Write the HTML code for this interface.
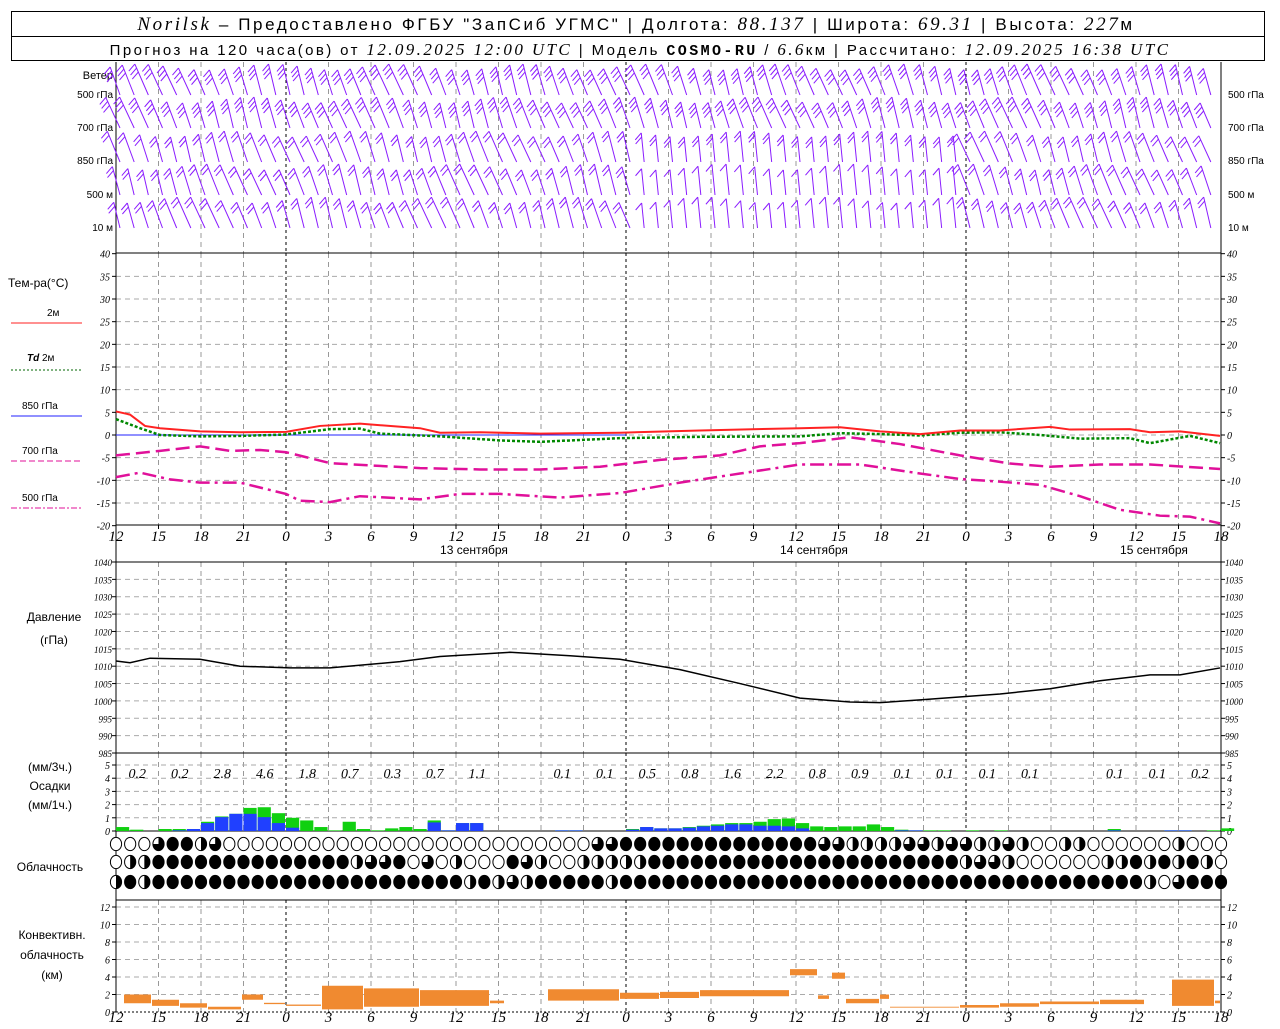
<!DOCTYPE html>
<html><head><meta charset="utf-8"><style>
body{margin:0;background:#fff;width:1280px;height:1024px;overflow:hidden;font-family:"Liberation Sans","DejaVu Sans",sans-serif}
svg text{font-family:"Liberation Sans","DejaVu Sans",sans-serif}
.it{font-family:"Liberation Serif",serif;font-style:italic}
</style></head><body>
<svg id="s" width="1280" height="1024" xmlns="http://www.w3.org/2000/svg">
<rect x="11.5" y="11.5" width="1253" height="49" fill="none" stroke="#000"/>
<line x1="11" y1="36.5" x2="1265" y2="36.5" stroke="#000"/>
<text x="636" y="30" font-size="17" text-anchor="middle" letter-spacing="2.6"><tspan class="it" font-size="19">Norilsk</tspan> – Предоставлено ФГБУ "ЗапСиб УГМС" | Долгота: <tspan class="it" font-size="19">88.137</tspan> | Широта: <tspan class="it" font-size="19">69.31</tspan> | Высота: <tspan class="it" font-size="19">227</tspan>м</text>
<text x="640" y="55" font-size="15" text-anchor="middle" letter-spacing="2.4">Прогноз на 120 часа(ов) от <tspan class="it" font-size="17">12.09.2025 12:00 UTC</tspan>  | Модель <tspan font-weight="bold" font-family="Liberation Mono">COSMO-RU</tspan> / <tspan class="it" font-size="17">6.6</tspan>км | Рассчитано: <tspan class="it" font-size="17">12.09.2025 16:38 UTC</tspan></text>
<g id="g"></g>
</svg>
<script>
const g=document.getElementById('g');let h='';
const X0=116,X1=1221,PH=(X1-X0)/78;
const hx=t=>X0+t*PH;
function L(x1,y1,x2,y2,c,w,d){h+=`<line x1="${x1}" y1="${y1}" x2="${x2}" y2="${y2}" stroke="${c}" stroke-width="${w||1}" ${d?`stroke-dasharray="${d}"`:''}/>`}
function T(x,y,s,fs,a,cls,col){h+=`<text x="${x}" y="${y}" font-size="${fs}" text-anchor="${a||'start'}" ${cls?`class="${cls}"`:''} fill="${col||'#000'}">${s}</text>`}
function R(x,y,w,hh,c){h+=`<rect x="${x}" y="${y}" width="${w}" height="${hh}" fill="${c}"/>`}
function vgrid(y1,y2){for(let t=3;t<78;t+=3){const day=(t-12)%24==0;L(hx(t),y1,hx(t),y2,day?'#000':'#999',1,day?'3,3':'5,4')}}
vgrid(62,253);vgrid(253,525);vgrid(562,753);vgrid(753,831);vgrid(900,1012);
const ty=v=>435-v*4.533;
for(let v=-20;v<=40;v+=5){const y=ty(v);if(v>-20&&v<40)L(X0,y,X1,y,'#aaa',1,'5,4');L(X0-4,y,X0,y,'#000');L(X1,y,X1+4,y,'#000');T(X0-6,y+4,v,10,'end','it');T(X1+6,y+4,v,10,'start','it')}
const py=p=>562+(1040-p)*3.473;
for(let p=985;p<=1040;p+=5){const y=py(p);if(p>985&&p<1040)L(X0,y,X1,y,'#aaa',1,'5,4');L(X0-4,y,X0,y,'#000');L(X1,y,X1+4,y,'#000');T(X0-4,y+4,p,9,'end','it');T(X1+4,y+4,p,9,'start','it')}
const ry=v=>831-v*13.2;
for(let v=0;v<=5;v++){const y=ry(v);if(v>0)L(X0,y,X1,y,'#aaa',1,'5,4');L(X0-4,y,X0,y,'#000');L(X1,y,X1+4,y,'#000');T(X0-6,y+4,v,10,'end','it');T(X1+6,y+4,v,10,'start','it')}
const cy=v=>1012-v*8.75;
for(let v=0;v<=12;v+=2){const y=cy(v);if(v>0)L(X0,y,X1,y,'#aaa',1,'5,4');L(X0-4,y,X0,y,'#000');L(X1,y,X1+4,y,'#000');T(X0-6,y+4,v,10,'end','it');T(X1+6,y+4,v,10,'start','it')}
L(X0,62,X0,1012,'#000');L(X1,62,X1,1012,'#000');
L(X0,253,X1,253,'#000');L(X0,525,X1,525,'#000');L(X0,753,X1,753,'#000');L(X0,562,X1,562,'#000');L(X0,831,X1,831,'#000');L(X0,900,X1,900,'#000');L(X0,1012,X1,1012,'#000',1,'2,2');
const lab=[12,15,18,21,0,3,6,9,12,15,18,21,0,3,6,9,12,15,18,21,0,3,6,9,12,15,18];
lab.forEach((l,i)=>{const x=hx(i*3);L(x,525,x,529,'#000');T(x,541,l,15,'middle','it');T(x,1022,l,15,'middle','it')});
T(474,554,'13 сентября',12,'middle');T(814,554,'14 сентября',12,'middle');T(1154,554,'15 сентября',12,'middle');
T(113,79,'Ветер',11,'end');
[['500 гПа',98],['700 гПа',131],['850 гПа',164],['500 м',198],['10  м',231]].forEach(a=>{T(113,a[1],a[0],10,'end');T(1228,a[1],a[0],10,'start')});
T(8,287,'Тем-ра(°C)',12);
T(47,316,'2м',10);L(11,323,82,323,'#f22');
T(27,361,'<tspan font-weight="bold" font-style="italic">Td</tspan>  2м',10);L(11,370,82,370,'#060',1,'2,2');
T(22,409,'850 гПа',10);L(11,416,82,416,'#22f');
T(22,454,'700 гПа',10);L(11,461,82,461,'#e0109a',1,'6,3');
T(22,501,'500 гПа',10);L(11,508,82,508,'#e0109a',1,'6,2,2,2');
T(54,621,'Давление',12,'middle');T(54,644,'(гПа)',12,'middle');
T(50,771,'(мм/3ч.)',12,'middle');T(50,790,'Осадки',12,'middle');T(50,809,'(мм/1ч.)',12,'middle');
T(50,871,'Облачность',12,'middle');
T(52,939,'Конвективн.',12,'middle');T(52,959,'облачность',12,'middle');T(52,979,'(км)',12,'middle');
function poly(pts,f,c,w,d){h+=`<polyline fill="none" stroke="${c}" stroke-width="${w}" ${d?`stroke-dasharray="${d}"`:''} points="${pts.map(p=>p[0]+','+f(p[1])).join(' ')}"/>`}
L(X0,435,626,435,'#22f');
poly([[116,-9.3],[140,-8.3],[170,-9.8],[200,-10.5],[240,-10.5],[286,-13],[300,-14.5],[330,-14.8],[360,-13.5],[420,-14.2],[460,-13],[500,-13],[560,-13.8],[620,-12.8],[680,-10.5],[740,-8.5],[800,-6.5],[860,-6.5],[920,-8.5],[960,-9.7],[1000,-10.3],[1040,-11],[1080,-13.5],[1120,-16.5],[1160,-17.8],[1190,-18],[1220,-19.5]],ty,'#e0109a',2.5,'14,5,3,5');
poly([[116,-4.5],[160,-3.5],[200,-2.5],[230,-3.5],[260,-3.3],[286,-3.8],[330,-6.2],[370,-6.7],[420,-7.3],[480,-7.6],[540,-7.6],[600,-7],[660,-5.5],[720,-4.5],[760,-2.5],[800,-1.8],[850,-0.5],[900,-2],[960,-4.5],[1010,-6.3],[1050,-7],[1100,-6.5],[1150,-6.5],[1220,-7.5]],ty,'#e0109a',2.5,'14,6');
poly([[116,3.5],[140,1.5],[160,0],[200,-0.3],[240,-0.2],[286,0.1],[330,1.3],[360,1.4],[380,0.3],[440,-0.3],[500,-1.2],[540,-1.5],[620,-0.7],[700,-0.4],[800,-0.3],[840,0.4],[880,0.2],[920,-0.1],[960,0.5],[1000,0.6],[1040,0],[1080,-0.8],[1130,-0.7],[1150,-1.8],[1190,-0.2],[1220,-1.8]],ty,'#080',2.5,'3,2');
poly([[116,5.2],[130,4.5],[145,2],[160,1.5],[200,0.8],[240,0.6],[286,0.7],[320,2],[360,2.5],[420,1.5],[440,0.5],[480,0.6],[540,0.3],[620,0.5],[700,1],[800,1.5],[840,1.7],[880,0.8],[920,0.2],[960,1],[1000,1],[1050,1.8],[1070,1.2],[1130,1.3],[1150,0.6],[1180,0.8],[1220,-0.2]],ty,'#f22',2);
poly([[116,1011.5],[130,1011],[150,1012.3],[200,1012],[240,1010],[290,1009.5],[330,1009.5],[400,1011.3],[440,1012.8],[510,1014],[570,1013],[620,1012],[680,1009],[740,1005],[800,1000.8],[850,999.7],[880,999.5],[920,1000.3],[1000,1002],[1050,1003.5],[1100,1005.8],[1150,1007.5],[1180,1007.5],[1220,1009.5]],py,'#000',1.5);
['0.2','0.2','2.8','4.6','1.8','0.7','0.3','0.7','1.1','','0.1','0.1','0.5','0.8','1.6','2.2','0.8','0.9','0.1','0.1','0.1','0.1','','0.1','0.1','0.2'].forEach((s,i)=>{if(s)T(hx(i*3+1.5),778,s,14,'middle','it')});
const tot=[.3,.1,0,.15,.15,.15,.7,1.1,1.3,1.75,1.8,1.35,1,.8,.3,.05,.7,.15,.05,.2,.3,.15,.8,.05,.6,.6,0,0,0,0,0,.05,.05,0,0,0,.15,.3,.2,.2,.3,.4,.5,.6,.6,.7,.9,.95,.6,.35,.3,.35,.35,.5,.3,.1,.05,.05,.05,0,.05,0,.05,0,0,0,0,0,0,0,.15,0,0,0,.05,.05,0,.05,.2];
const blu=[0,0,0,0,.05,.15,.6,1.05,1.3,1.3,1.05,.6,.25,0,0,0,0,0,0,0,0,0,.65,.05,.6,.6,0,0,0,0,0,.05,.05,0,0,0,.1,.3,.2,.2,.25,.35,.4,.5,.5,.4,.4,.35,.2,0,0,0,0,0,0,.05,.05,0,0,0,0,0,0,0,0,0,0,0,0,0,.05,0,0,0,.05,.05,0,0,0];
tot.forEach((v,i)=>{if(v>0){const x=hx(i),w=PH-1;R(x,ry(v),w,v*13.2,'#10d010');const b=blu[i];if(b>0)R(x,ry(b),w,b*13.2,'#2040ff')}});
const rows=[
"oooqffhqooooooooooooooooooooooooooqqffffffffffffffqqhhhhqqhqqhhqhoohhoooooohoooo",
"ohhffffffffffffffhqqfoqohooofqhoohhhhhffffffffffffffffffffffhqqhoooooohhfhfhfho",
"hfhffffffffffffffffffffffhfhqhfffffhfffffffffffffffffffffffffffffffffffffhoqffff"];
const yc=[844,862,882];
rows.forEach((r,ri)=>{for(let i=0;i<79;i++){const c=r[i]||'f',x=hx(i),y=yc[ri];
 h+=`<ellipse cx="${x}" cy="${y}" rx="5.6" ry="6.6" fill="${c=='f'?'#000':'#fff'}" stroke="#000"/>`;
 if(c=='h')h+=`<path d="M${x},${y-6.6}A5.6,6.6 0 0 1 ${x},${y+6.6}Z" fill="#000"/>`;
 if(c=='q')h+=`<path d="M${x},${y}L${x},${y-6.6}A5.6,6.6 0 1 1 ${x-5.6},${y}Z" fill="#000"/>`;}});
[[124,152,1,2],[152,180,.7,1.4],[180,208,.5,1],[208,242,.3,.6],[242,264,1.4,2],[264,286,.9,1.05],[286,322,.7,.85],[322,364,.3,3],[364,420,.6,2.7],[420,490,.7,2.5],[490,505,1,1.3],[548,620,1.3,2.6],[620,660,1.5,2.2],[660,700,1.6,2.3],[700,790,1.8,2.5],[790,818,4.2,4.9],[818,830,1.5,1.9],[832,846,3.8,4.5],[846,880,1,1.5],[880,890,1.5,2],[890,960,.5,.6],[960,1000,.5,.8],[1000,1040,.6,1],[1040,1100,.9,1.2],[1100,1145,.9,1.4],[1172,1215,.7,3.7],[1215,1221,1,1.3]].forEach(b=>R(b[0],cy(b[3]),b[1]-b[0]-1,(b[3]-b[2])*8.75,'#f08a30'));
const base=[95,128,162,195,228];
for(let r=0;r<5;r++){for(let i=0;i<78;i++){const x=hx(i)+4,yb=base[r];
 const len=28+3*Math.sin(i*0.7+r);
 let sl=0.35+0.12*Math.sin(i*0.4+r*1.3);
 if(i>36&&i<60&&r>=2) sl=0.1;
 const x2=x-len*sl*-1*-1, y2=yb-len;
 L(x,yb,x-len*sl,y2,'#8a1cff',1);
 const xt=x-len*sl;
 const n=(r<2?3:2)-(i>36&&i<60&&r>2?1:0);
 for(let k=0;k<n;k++){const yy=y2+k*4,xx=xt+(x-xt)*(k*4/len);L(xx,yy,xx-6,yy+7,'#8a1cff',1)}}}
g.innerHTML=h;
</script>
</body></html>
